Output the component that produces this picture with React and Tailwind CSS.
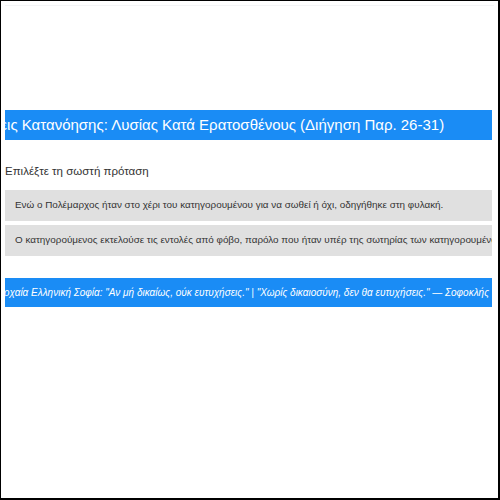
export default function App() {
  return (
    <div
      className="w-[500px] h-[500px] bg-white border-t border-l border-r-2 border-b-2 border-black overflow-hidden"
      style={{ fontFamily: '"Liberation Sans", Arial, sans-serif' }}
    >
      <div className="mx-[4px] mt-[4px] h-[490px] border-t border-gray-100 flex flex-col">
        {/* page title banner, scrolled text */}
        <div className="mt-[104px] mr-[2px] h-[30px] bg-[#1a8cf5] overflow-hidden flex items-center">
          <div className="whitespace-nowrap text-white text-[15px] -ml-[49px]">
            Ασκήσεις Κατανόησης: Λυσίας Κατά Ερατοσθένους (Διήγηση Παρ. 26-31)
          </div>
        </div>

        <div className="mt-[26px] text-[11.5px] text-[#333] leading-none">Επιλέξτε τη σωστή πρόταση</div>

        <div className="mt-[12px] mr-[2px] flex flex-col gap-[4px]">
          <div className="h-[31px] bg-[#e0e0e0] flex items-center px-[10px] overflow-hidden">
            <span className="whitespace-nowrap text-[9.9px] text-[#333]">
              Ενώ ο Πολέμαρχος ήταν στο χέρι του κατηγορουμένου για να σωθεί ή όχι, οδηγήθηκε στη φυλακή.
            </span>
          </div>
          <div className="h-[31px] bg-[#e0e0e0] flex items-center px-[10px] overflow-hidden">
            <span className="whitespace-nowrap text-[9.9px] text-[#333]">
              Ο κατηγορούμενος εκτελούσε τις εντολές από φόβο, παρόλο που ήταν υπέρ της σωτηρίας των κατηγορουμένων.
            </span>
          </div>
        </div>

        {/* quote ticker */}
        <div className="mt-[22px] mr-[2px] h-[29px] bg-[#1a8cf5] overflow-hidden flex items-center">
          <div className="whitespace-nowrap text-white italic text-[10px] -ml-[8px]">
            Αρχαία Ελληνική Σοφία: "Αν μή δικαίως, ούκ ευτυχήσεις." | "Χωρίς δικαιοσύνη, δεν θα ευτυχήσεις." — Σοφοκλής
          </div>
        </div>
      </div>
    </div>
  );
}
